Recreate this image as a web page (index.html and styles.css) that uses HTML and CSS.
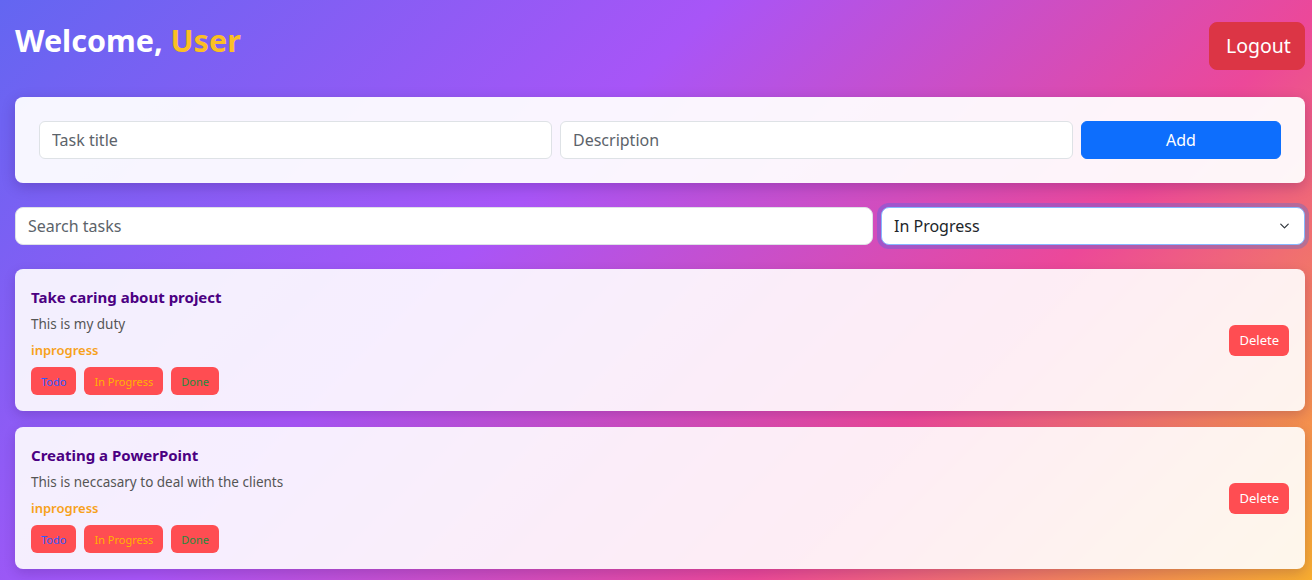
FILE: index.html
```html
<!DOCTYPE html>
<html lang="en">
<head>
<meta charset="utf-8">
<title>Tasks</title>
<link rel="stylesheet" href="styles.css">
</head>
<body>
<div class="page">
  <header class="top">
    <h2 class="welcome">Welcome, <span class="user">User</span></h2>
    <button class="btn-logout">Logout</button>
  </header>

  <section class="add-card">
    <input class="field" type="text" placeholder="Task title">
    <input class="field" type="text" placeholder="Description">
    <button class="btn-add">Add</button>
  </section>

  <div class="filters">
    <input class="field search" type="text" placeholder="Search tasks">
    <select class="field select">
      <option>In Progress</option>
    </select>
  </div>

  <ul class="tasks">
    <li class="task">
      <div class="task-body">
        <h5 class="task-title">Take caring about project</h5>
        <p class="task-desc">This is my duty</p>
        <p class="task-status">inprogress</p>
        <div class="task-actions">
          <button class="st st-todo">Todo</button>
          <button class="st st-prog">In Progress</button>
          <button class="st st-done">Done</button>
        </div>
      </div>
      <button class="btn-delete">Delete</button>
    </li>
    <li class="task">
      <div class="task-body">
        <h5 class="task-title">Creating a PowerPoint</h5>
        <p class="task-desc">This is neccasary to deal with the clients</p>
        <p class="task-status">inprogress</p>
        <div class="task-actions">
          <button class="st st-todo">Todo</button>
          <button class="st st-prog">In Progress</button>
          <button class="st st-done">Done</button>
        </div>
      </div>
      <button class="btn-delete">Delete</button>
    </li>
  </ul>
</div>
</body>
</html>
```

FILE: styles.css
```css
* { box-sizing: border-box; }

html, body { margin: 0; padding: 0; }

body {
  min-height: 580px;
  font-family: "Noto Sans", "Open Sans", sans-serif;
  background: linear-gradient(135deg, #6366f1 0%, #a855f7 38%, #ec4899 70%, #f7ad2f 100%);
  color: #212529;
}

.page {
  padding: 15px 7px 15px 15px;
}

.top {
  display: flex;
  justify-content: space-between;
  align-items: flex-start;
  padding-top: 7px;
}

.welcome {
  margin: 0;
  font-size: 30.5px;
  line-height: 36px;
  font-weight: 700;
  color: #ffffff;
}

.user { color: #fbbf24; }

.btn-logout {
  font-family: inherit;
  font-size: 19.5px;
  line-height: 30px;
  padding: 8px 16px;
  width: 96px;
  color: #fff;
  background: #dc3545;
  border: 1px solid #dc3545;
  border-radius: 8px;
}

.add-card {
  margin-top: 27px;
  display: grid;
  grid-template-columns: 1fr 1fr 200px;
  gap: 8px;
  padding: 24px;
  background: rgba(255, 255, 255, 0.94);
  border-radius: 8px;
  box-shadow: 0 4px 14px rgba(40, 0, 80, 0.22);
}

.field {
  height: 38px;
  width: 100%;
  font-family: inherit;
  font-size: 16px;
  padding: 0 12px;
  color: #212529;
  background: #fff;
  border: 1px solid #dee2e6;
  border-radius: 6px;
  outline: none;
}

.field::placeholder { color: #5c636a; }

.btn-add {
  height: 38px;
  font-family: inherit;
  font-size: 16px;
  color: #fff;
  background: #0d6efd;
  border: 1px solid #0d6efd;
  border-radius: 6px;
}

.filters {
  margin-top: 24px;
  display: grid;
  grid-template-columns: 1fr 424px;
  gap: 8px;
}

.search { border-radius: 8px; }

.select {
  appearance: none;
  -webkit-appearance: none;
  border-radius: 8px;
  border-color: #86b7fe;
  box-shadow: 0 0 0 4px rgba(13, 110, 253, 0.25);
  padding-right: 36px;
  background-image: url("data:image/svg+xml,%3csvg xmlns='http://www.w3.org/2000/svg' viewBox='0 0 16 16'%3e%3cpath fill='none' stroke='%23343a40' stroke-linecap='round' stroke-linejoin='round' stroke-width='2' d='m2 5 6 6 6-6'/%3e%3c/svg%3e");
  background-repeat: no-repeat;
  background-position: right 13px center;
  background-size: 13px 10px;
}

.tasks {
  list-style: none;
  margin: 24px 0 0;
  padding: 0;
  display: flex;
  flex-direction: column;
  gap: 16px;
}

.task {
  display: flex;
  justify-content: space-between;
  align-items: center;
  padding: 16px;
  background: rgba(255, 255, 255, 0.9);
  border-radius: 8px;
  box-shadow: 0 4px 12px rgba(40, 0, 80, 0.18);
}

.task-title {
  margin: 0 0 5px;
  font-size: 15px;
  line-height: 24px;
  font-weight: 700;
  color: #4b0082;
}

.task-desc {
  margin: 0 0 6px;
  font-size: 13.5px;
  line-height: 20px;
  color: #555;
}

.task-status {
  margin: 0 0 7px;
  font-size: 13px;
  line-height: 20px;
  font-weight: 600;
  color: #f7a11a;
}

.task-actions {
  display: flex;
  gap: 8px;
}

.st {
  height: 28px;
  padding: 0 10px;
  font-family: inherit;
  font-size: 11px;
  background: #ff4d52;
  border: none;
  border-radius: 6px;
}

.st-todo { color: #2f5bff; }
.st-prog { color: #ffb300; }
.st-done { color: #1e8a3e; }

.btn-delete {
  height: 31px;
  padding: 0 10px;
  font-family: inherit;
  font-size: 13px;
  color: #fff;
  background: #ff4d52;
  border: none;
  border-radius: 6px;
}
```
